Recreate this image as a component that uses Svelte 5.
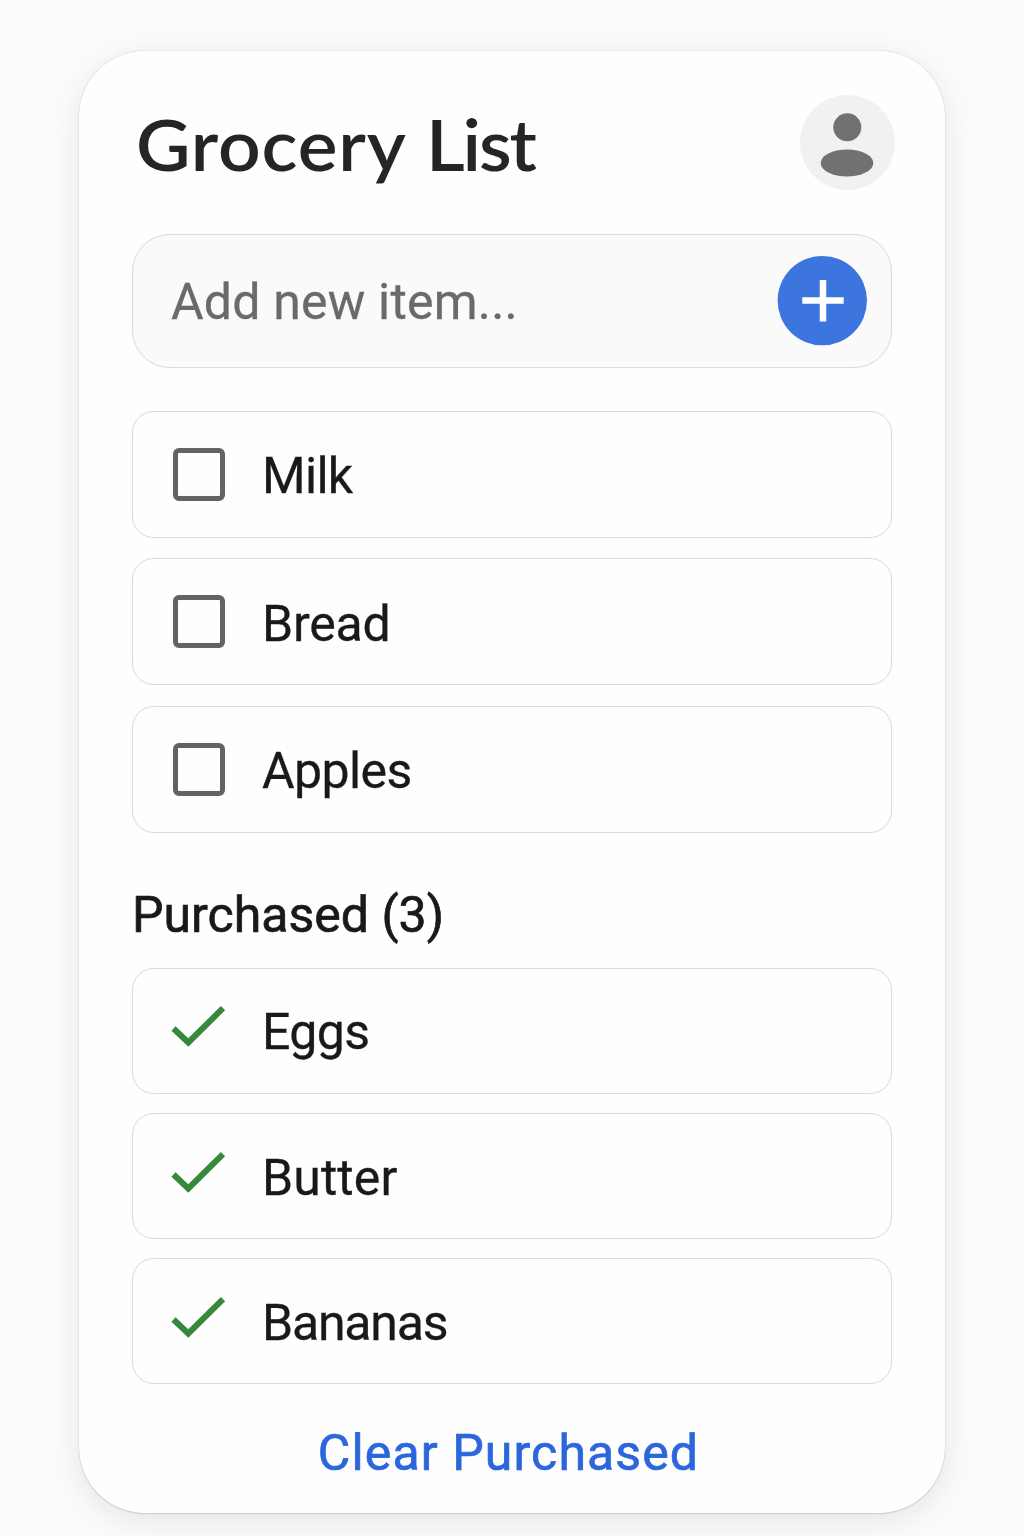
<script>
  // `tracking` is the optical letter-spacing of each word, in pixels
  let pending = $state([
    { name: 'Milk', tracking: -0.7 },
    { name: 'Bread', tracking: -0.2 },
    { name: 'Apples', tracking: -0.6 },
  ]);
  let purchased = $state([
    { name: 'Eggs', tracking: -0.6 },
    { name: 'Butter', tracking: 0.1 },
    { name: 'Bananas', tracking: -1.2 },
  ]);
</script>

<main class="card">
  <header>
    <h1>Grocery <span class="tight">List</span></h1>
    <button class="avatar" aria-label="Account">
      <svg viewBox="0 0 95 95" width="95" height="95">
        <circle cx="47.3" cy="32.3" r="14" />
        <ellipse cx="47" cy="68" rx="26.3" ry="13.4" />
      </svg>
    </button>
  </header>

  <div class="add">
    <span class="label placeholder">Add new item...</span>
    <button class="plus" aria-label="Add">
      <svg viewBox="0 0 90 90" width="90" height="90">
        <circle cx="45.300" cy="44.600" r="44.700" />
        <path d="M25.300 44.500H66.700M46 24V65.500" />
      </svg>
    </button>
  </div>

  <ul class="pending">
    {#each pending as item}
      <li>
        <span class="box"></span>
        <span class="label" style="letter-spacing: {item.tracking}px">{item.name}</span>
      </li>
    {/each}
  </ul>

  <h2>Purchased ({purchased.length})</h2>

  <ul class="done">
    {#each purchased as item}
      <li>
        <svg class="check" viewBox="0 0 54 42" width="54" height="42">
          <path d="M2.500 22.500L17.300 36.500L52 2.200" />
        </svg>
        <span class="label" style="letter-spacing: {item.tracking}px">{item.name}</span>
      </li>
    {/each}
  </ul>

  <button class="clear">Clear Purchased</button>
</main>

<style>
  :global(body) { margin: 0; background: #fbfbfb; }
  :global(#app) { height: 1536px; overflow: hidden; }
  .card {
    box-sizing: border-box;
    width: 866px;
    height: 1462px;
    margin: 51px 0 0 79px;
    padding: 44px 53px 0;
    border-radius: 66px;
    background: #fefefe;
    box-shadow: 0 0 2px rgba(0, 0, 0, 0.16), 0 1px 1px rgba(0, 0, 0, 0.1), 0 8px 32px rgba(0, 0, 0, 0.09);
    font-family: Roboto, sans-serif;
    color: #18191a;
    display: flex;
    flex-direction: column;
  }
  button { border: 0; padding: 0; background: none; font: inherit; }
  svg { display: block; overflow: visible; }
  header { display: flex; justify-content: space-between; height: 95px; margin: 0 -3px 0 5px; }
  h1 {
    margin: 0 0 0 -1px;
    font: 600 71px/98px Lato, sans-serif;
    letter-spacing: 0.8px;
    word-spacing: 1.5px;
    white-space: nowrap;
    color: #242526;
    transform: scaleX(1.055);
    transform-origin: left;
  }
  .tight { letter-spacing: -2px; }
  .avatar { width: 95px; height: 95px; border-radius: 50%; background: #f1f1f1; }
  .avatar svg { fill: #707173; }
  .add {
    box-sizing: border-box;
    height: 134px;
    margin-top: 44px;
    padding: 0 24px 0 38px;
    display: flex;
    align-items: center;
    justify-content: space-between;
    border: 1px solid #dcdcdc;
    border-radius: 38px;
    background: #fafafa;
    box-shadow: 0 0 1px rgba(0, 0, 0, 0.1);
  }
  .label, h2, .clear { font-size: 50px; line-height: 60px; white-space: nowrap; }
  .placeholder { color: #6a6a6a; letter-spacing: 0.2px; padding-top: 1px; -webkit-text-stroke: 0.3px #6a6a6a; }
  .plus { width: 90px; height: 90px; }
  .plus circle { fill: #3d75df; }
  .plus path { stroke: #fff; stroke-width: 6.5; }
  ul { list-style: none; margin: 0; padding: 0; display: flex; flex-direction: column; }
  li {
    box-sizing: border-box;
    display: flex;
    align-items: center;
    padding-left: 40px;
    border: 1px solid #dcdcdc;
    border-radius: 22px;
    box-shadow: 0 0 1px rgba(0, 0, 0, 0.1);
  }
  li .label { padding-top: 4px; margin-left: -1px; -webkit-text-stroke: 0.3px #18191a; }
  .pending { margin-top: 42.600px; gap: 20.600px; }
  .pending li { height: 127px; }
  .done { gap: 19.400px; margin-top: 22.200px; }
  .done li { height: 126px; padding-left: 38px; }
  .done .label { padding-top: 3px; }
  .box { box-sizing: border-box; width: 52px; height: 53px; margin-right: 38px; border: 5px solid #636363; border-radius: 6px; }
  .check { margin: 0 38px 7px 0; }
  .check path { fill: none; stroke: #36883a; stroke-width: 6; }
  h2 { margin: 52.700px 0 0; font-weight: 400; -webkit-text-stroke: 0.7px #18191a; }
  .clear { color: #2c66dc; margin: 39px 7px 0 0; font-weight: 400; letter-spacing: 1.100px; -webkit-text-stroke: 0.7px #2c66dc; }
</style>
